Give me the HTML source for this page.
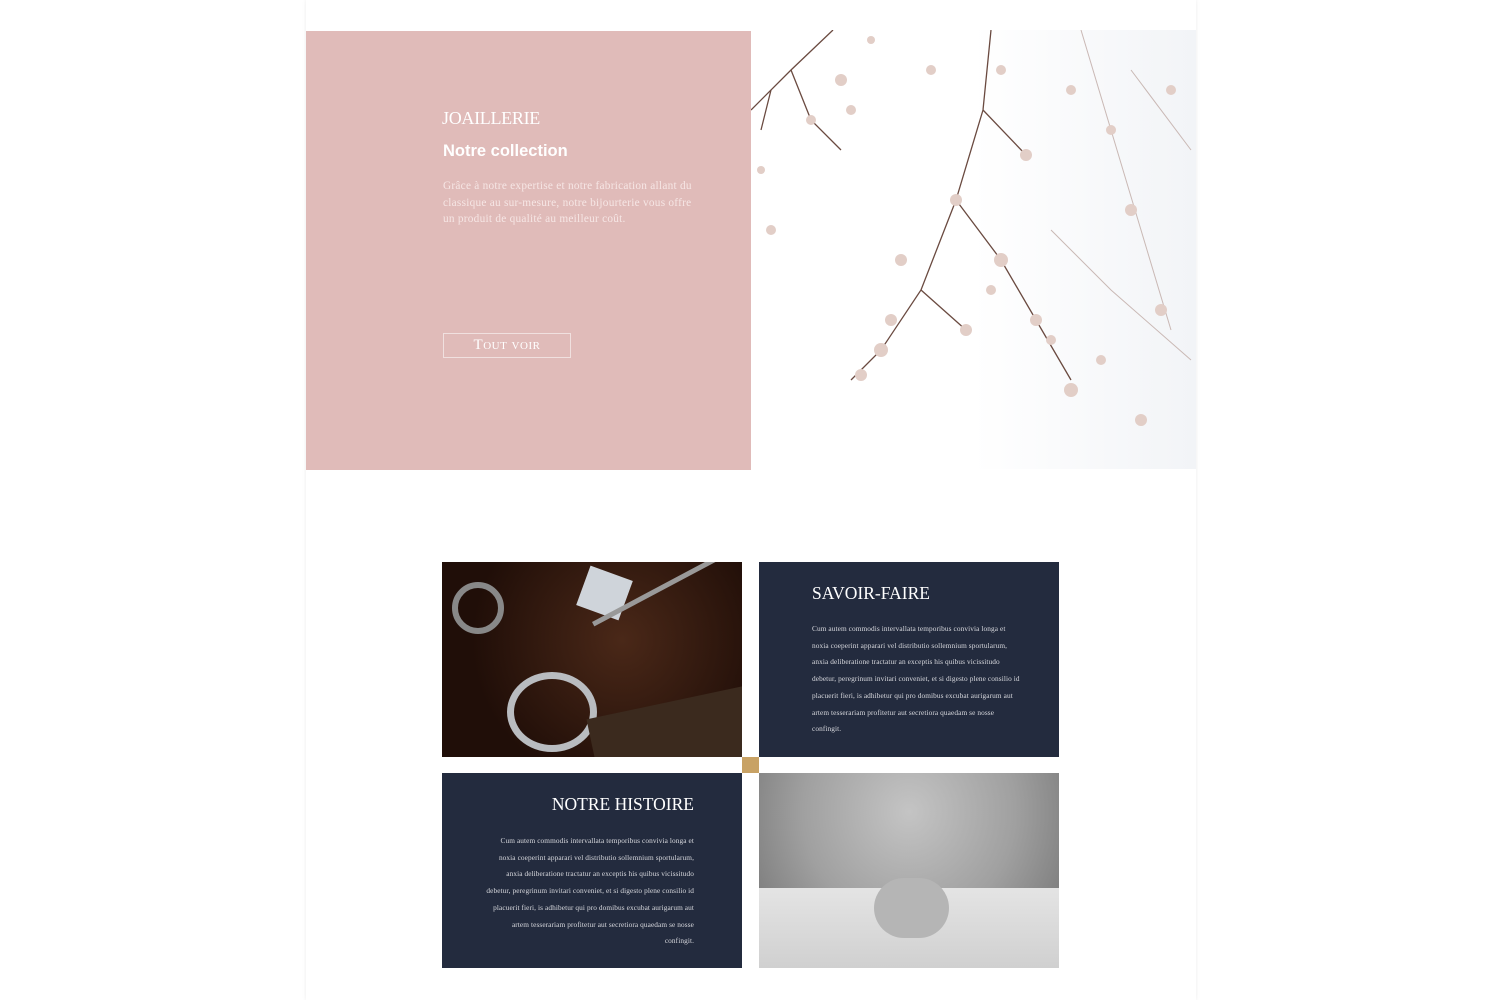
<!DOCTYPE html>
<html><head><meta charset="utf-8"><style>
body{margin:0;width:1500px;height:1000px;background:#fff;position:relative;overflow:hidden;font-family:"Liberation Serif",serif}
.wrap{position:absolute;left:306px;top:0;width:890px;height:1000px;box-shadow:0 0 4px rgba(0,0,0,.08)}
.pink{position:absolute;left:306px;top:31px;width:445px;height:439px;background:#e0bbb9}
.abs{position:absolute}
.t1{left:442px;top:108px;color:#fff;font-size:18px;letter-spacing:-0.3px}
.t2{left:443px;top:142px;color:#fff;font-family:"Liberation Sans",sans-serif;font-weight:bold;font-size:16.5px}
.t3{left:443px;top:178px;color:#f6e6e5;font-size:11.3px;line-height:16.7px;width:252px;letter-spacing:0.25px}
.btn{left:443px;top:333px;width:126px;height:23px;border:1px solid #f0e0df;color:#fff;text-align:center;font-size:15px;line-height:23px;font-variant:small-caps;letter-spacing:0.5px}
.navy{position:absolute;background:#232b3e;color:#fff}
.p{font-size:7.3px;line-height:16.7px;color:#d8d9de;letter-spacing:0.1px}
</style></head><body>
<div class="wrap"></div>
<div class="pink"></div>
<div class="abs t1">JOAILLERIE</div>
<div class="abs t2">Notre collection</div>
<div class="abs t3">Grâce à notre expertise et notre fabrication allant du classique au sur-mesure, notre bijourterie vous offre un produit de qualité au meilleur coût.</div>
<div class="abs btn">Tout voir</div>
<svg class="abs" style="left:751px;top:30px" width="445" height="439">
<defs><linearGradient id="g" x1="0" x2="1"><stop offset="0.5" stop-color="#fff"/><stop offset="1" stop-color="#f2f4f7"/></linearGradient></defs>
<rect width="445" height="439" fill="url(#g)"/>
<g stroke="#6a4a40" stroke-width="1.3" fill="none">
<path d="M0 80 L40 40 L82 0"/><path d="M240 0 L232 80 L205 170 L170 260 L130 320 L100 350"/>
<path d="M205 170 L250 230 L285 290 L320 350"/><path d="M232 80 L275 125"/>
<path d="M40 40 L60 90 L90 120"/><path d="M170 260 L215 300"/>
<path d="M20 60 L10 100"/>
</g>
<g stroke="#c9b8b4" stroke-width="1" fill="none">
<path d="M330 0 L360 100 L390 200 L420 300"/><path d="M380 40 L440 120"/><path d="M300 200 L360 260 L440 330"/>
</g>
<g fill="#e2cec7">
<circle cx="90" cy="50" r="6"/><circle cx="180" cy="40" r="5"/><circle cx="130" cy="320" r="7"/><circle cx="110" cy="345" r="6"/><circle cx="215" cy="300" r="6"/><circle cx="250" cy="230" r="7"/><circle cx="285" cy="290" r="6"/><circle cx="320" cy="360" r="7"/><circle cx="275" cy="125" r="6"/><circle cx="205" cy="170" r="6"/><circle cx="60" cy="90" r="5"/><circle cx="20" cy="200" r="5"/><circle cx="380" cy="180" r="6"/><circle cx="410" cy="280" r="6"/><circle cx="360" cy="100" r="5"/><circle cx="150" cy="230" r="6"/><circle cx="250" cy="40" r="5"/><circle cx="320" cy="60" r="5"/><circle cx="420" cy="60" r="5"/><circle cx="390" cy="390" r="6"/><circle cx="140" cy="290" r="6"/><circle cx="240" cy="260" r="5"/><circle cx="300" cy="310" r="5"/><circle cx="10" cy="140" r="4"/><circle cx="120" cy="10" r="4"/><circle cx="350" cy="330" r="5"/><circle cx="100" cy="80" r="5"/>
</g></svg>
<div class="abs" style="left:442px;top:562px;width:300px;height:195px;background:radial-gradient(circle at 60% 40%,#4a2818,#200e08 70%);overflow:hidden">
<div class="abs" style="left:140px;top:10px;width:45px;height:42px;background:#cfd4da;transform:rotate(20deg)"></div>
<div class="abs" style="left:150px;top:60px;width:160px;height:5px;background:#999;transform:rotate(-28deg);transform-origin:0 0"></div>
<div class="abs" style="left:65px;top:110px;width:90px;height:80px;border:7px solid #b9bcc0;border-radius:50%;box-sizing:border-box"></div>
<div class="abs" style="left:10px;top:20px;width:40px;height:40px;border:6px solid #888;border-radius:50%"></div>
<div class="abs" style="left:150px;top:140px;width:160px;height:70px;background:#3b2a1e;transform:rotate(-12deg)"></div>
</div>
<div class="navy" style="left:759px;top:562px;width:300px;height:195px">
<div class="abs" style="left:53px;top:21px;font-size:17.5px">SAVOIR-FAIRE</div>
<div class="abs p" style="left:53px;top:59px;width:212px">Cum autem commodis intervallata temporibus convivia longa et noxia coeperint apparari vel distributio sollemnium sportularum, anxia deliberatione tractatur an exceptis his quibus vicissitudo debetur, peregrinum invitari conveniet, et si digesto plene consilio id placuerit fieri, is adhibetur qui pro domibus excubat aurigarum aut artem tesserariam profitetur aut secretiora quaedam se nosse confingit.</div>
</div>
<div class="abs" style="left:742px;top:757px;width:17px;height:16px;background:#c8a265"></div>
<div class="navy" style="left:442px;top:773px;width:300px;height:195px">
<div class="abs" style="right:48px;top:21px;font-size:17.5px">NOTRE HISTOIRE</div>
<div class="abs p" style="right:48px;top:60px;width:212px;text-align:right">Cum autem commodis intervallata temporibus convivia longa et noxia coeperint apparari vel distributio sollemnium sportularum, anxia deliberatione tractatur an exceptis his quibus vicissitudo debetur, peregrinum invitari conveniet, et si digesto plene consilio id placuerit fieri, is adhibetur qui pro domibus excubat aurigarum aut artem tesserariam profitetur aut secretiora quaedam se nosse confingit.</div>
</div>
<div class="abs" style="left:759px;top:773px;width:300px;height:195px;background:radial-gradient(ellipse at 50% 20%,#c4c4c4,#a0a0a0 50%,#6a6a6a 100%);overflow:hidden">
<div class="abs" style="left:0;top:115px;width:300px;height:80px;background:linear-gradient(#e4e4e4,#d0d0d0)"></div>
<div class="abs" style="left:115px;top:105px;width:75px;height:60px;background:#b5b5b5;border-radius:30px"></div>
</div>
</body></html>
